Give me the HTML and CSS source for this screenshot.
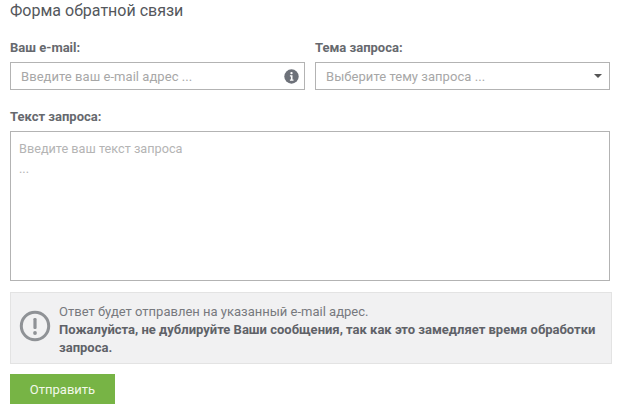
FILE: index.html
```html
<!DOCTYPE html>
<html lang="ru">
<head>
<meta charset="utf-8">
<title>Форма обратной связи</title>
<link rel="stylesheet" href="styles.css">
</head>
<body>
<form class="form">
  <h1 class="title">Форма обратной связи</h1>
  <div class="row">
    <div class="field">
      <label class="label">Ваш e-mail:</label>
      <div class="control">
        <span class="placeholder">Введите ваш e-mail адрес ...</span>
        <svg class="info" width="15" height="15" viewBox="0 0 15 15"><circle cx="7.5" cy="7.5" r="7.2" fill="#6d7179"/><circle cx="7.5" cy="4.1" r="1.2" fill="#fff"/><path d="M5.9 6.2h2.6v4.4h1v1.2H5.9v-1.2h1V7.4h-1z" fill="#fff"/></svg>
      </div>
    </div>
    <div class="field">
      <label class="label">Тема запроса:</label>
      <div class="control">
        <span class="placeholder">Выберите тему запроса ...</span>
        <span class="caret"></span>
      </div>
    </div>
  </div>
  <label class="label label-text">Текст запроса:</label>
  <div class="textarea">Введите ваш текст запроса<br>...</div>
  <div class="notice">
    <svg class="warn" width="32" height="32" viewBox="0 0 32 32"><circle cx="16" cy="16" r="13.7" fill="none" stroke="#8f9296" stroke-width="3"/><rect x="14.4" y="8" width="3.2" height="11" rx="1.2" fill="#8f9296"/><circle cx="16" cy="23" r="1.9" fill="#8f9296"/></svg>
    <p class="notice-text">Ответ будет отправлен на указанный e-mail адрес.<br><b>Пожалуйста, не дублируйте Ваши сообщения, так как это замедляет время обработки запроса.</b></p>
  </div>
  <button class="submit" type="button">Отправить</button>
</form>
</body>
</html>
```
FILE: styles.css
```css
* { box-sizing: border-box; }
html, body { margin: 0; background: #fff; }
body { font-family: Roboto, "Noto Sans", sans-serif; color: #5f6268; }
.form { width: 622px; height: 412px; padding: 1px 10px 0; display: flex; flex-direction: column; align-items: flex-start; }
.title { margin: 0; font-size: 16px; line-height: 20px; font-weight: 400; color: #54575c; }
.row { display: flex; gap: 10px; margin-top: 19px; width: 600px; }
.field { width: 295px; }
.label { display: block; font-size: 13px; line-height: 16px; font-weight: 700; color: #66696e; }
.control { margin-top: 6px; height: 28px; border: 1px solid #b3b3b3; display: flex; align-items: center; justify-content: space-between; padding: 0 5px 0 10px; background: #fff; }
.placeholder { font-size: 13px; letter-spacing: .05px; color: #a7a7a7; }
.info { display: block; }
.caret { width: 0; height: 0; border-left: 4px solid transparent; border-right: 4px solid transparent; border-top: 4px solid #555; margin-right: 2px; }
.label-text { margin-top: 19px; }
.textarea { margin-top: 6px; width: 600px; height: 150px; border: 1px solid #b3b3b3; padding: 7px 8px; font-size: 12.7px; line-height: 20px; color: #b4b4b4; }
.notice { margin-top: 11px; width: 602px; height: 72px; border: 1px solid #e3e3e3; background: #f1f1f2; display: flex; align-items: center; padding: 0 8px; gap: 8px; }
.warn { flex: none; margin-bottom: 5px; }
.notice-text { margin: 3px 0 0; font-size: 13px; line-height: 18px; color: #77797e; }
.notice-text b { color: #5f6268; }
.submit { margin-top: 10px; width: 105px; height: 30px; border: 0; background: #77b445; color: #f2f8ea; font: 400 13px Roboto, sans-serif; padding: 0; }
```
